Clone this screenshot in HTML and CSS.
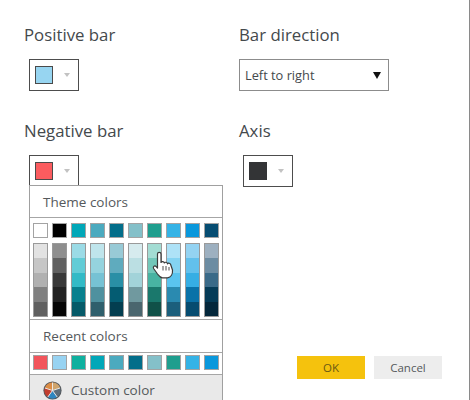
FILE: index.html
```html
<!DOCTYPE html>
<html lang="en">

<head>
    <meta charset="UTF-8">
    <meta name="viewport" content="width=device-width, initial-scale=1.0">
    <title>Bar colors</title>

    <link rel="stylesheet" href="styles.css">
</head>

<body>
    <div class="dialog">
        <div class="fields">
            <div class="field">
                <div class="field__label">Positive bar</div>
                <div class="picker">
                    <span class="picker__swatch picker__swatch--blue"></span>
                    <span class="picker__arrow"></span>
                </div>
            </div>
            <div class="field">
                <div class="field__label">Bar direction</div>
                <div class="select">
                    <span>Left to right</span>
                    <span class="select__arrow"></span>
                </div>
            </div>
            <div class="field">
                <div class="field__label">Negative bar</div>
                <div class="picker">
                    <span class="picker__swatch picker__swatch--red"></span>
                    <span class="picker__arrow"></span>
                </div>

                <div class="menu">
                    <div class="menu__title">Theme colors</div>
                    <div class="menu__theme">
                        <div class="tops">
                            <span class="chip" style="background:#ffffff"></span>
                            <span class="chip" style="background:#000000"></span>
                            <span class="chip" style="background:#01a7b8"></span>
                            <span class="chip" style="background:#4baabf"></span>
                            <span class="chip" style="background:#036e8a"></span>
                            <span class="chip" style="background:#84c0c9"></span>
                            <span class="chip" style="background:#1f9e8e"></span>
                            <span class="chip" style="background:#35b3e6"></span>
                            <span class="chip" style="background:#0a98dc"></span>
                            <span class="chip" style="background:#064d72"></span>
                        </div>
                        <div class="stacks" id="stacks"></div>
                    </div>
                    <div class="menu__title menu__title--recent">Recent colors</div>
                    <div class="menu__recent">
                        <span class="chip" style="background:#f2555c"></span>
                        <span class="chip" style="background:#98d3f2"></span>
                        <span class="chip" style="background:#0fb09f"></span>
                        <span class="chip" style="background:#01a7b8"></span>
                        <span class="chip" style="background:#4baabf"></span>
                        <span class="chip" style="background:#036e8a"></span>
                        <span class="chip" style="background:#84c0c9"></span>
                        <span class="chip" style="background:#1f9e8e"></span>
                        <span class="chip" style="background:#35b3e6"></span>
                        <span class="chip" style="background:#0a98dc"></span>
                    </div>
                    <div class="menu__custom">
                        <svg class="wheel" width="19" height="19" viewBox="0 0 20 20">
                            <circle cx="10" cy="10" r="9.6" fill="#55585c" />
                            <path d="M10 10 L10 1.6 A8.4 8.4 0 0 1 18 7.4 Z" fill="#cfa46c" />
                            <path d="M10 10 L18 7.4 A8.4 8.4 0 0 1 14.9 16.8 Z" fill="#5d6d7a" />
                            <path d="M10 10 L14.9 16.8 A8.4 8.4 0 0 1 5.1 16.8 Z" fill="#2e86c0" />
                            <path d="M10 10 L5.1 16.8 A8.4 8.4 0 0 1 2 7.4 Z" fill="#c23d2e" />
                            <path d="M10 10 L2 7.4 A8.4 8.4 0 0 1 10 1.6 Z" fill="#dc8d45" />
                            <path d="M10 10 L10 1.6 M10 10 L18 7.4 M10 10 L14.9 16.8 M10 10 L5.1 16.8 M10 10 L2 7.4" stroke="#eeeeee" stroke-width="1" />
                        </svg>
                        <span>Custom color</span>
                    </div>

                    <svg class="hand" width="22" height="28" viewBox="0 0 22 28">
                        <path d="M5.5 3 C5.5 0.8 9 0.8 9 3 L9 11.5 C9.5 10.3 12 10.3 12.3 12 C12.8 10.8 15.2 11 15.5 12.8 C16 11.8 18.6 12 18.8 14 L20.5 19 C20.8 23 19 26.5 15.5 26.8 L10.5 26.8 C8 26.8 7 25 5.5 23 L1.6 17.5 C0.6 15.6 2.8 14.2 4.2 15.6 L5.5 17 Z" fill="#ffffff" stroke="#3a3a3a" stroke-width="1.2" stroke-linejoin="round" />
                        <path d="M11 15 V19.5 M14 15 V19.5 M17 16 V19.5" stroke="#3a3a3a" stroke-width="0.9" fill="none" />
                    </svg>
                </div>
            </div>
            <div class="field">
                <div class="field__label">Axis</div>
                <div class="picker picker--axis">
                    <span class="picker__swatch picker__swatch--dark"></span>
                    <span class="picker__arrow"></span>
                </div>
            </div>
        </div>

        <div class="actions">
            <button class="btn btn--ok">OK</button>
            <button class="btn">Cancel</button>
        </div>
    </div>

    <script>
        // shades per theme column, light to dark
        var shades = [
            ["#e2e2e2", "#c6c6c6", "#b0b0b0", "#808080", "#606060"],
            ["#8e8e8e", "#606060", "#383838", "#222222", "#060606"],
            ["#9bdbe6", "#62ccd6", "#32bac6", "#08808e", "#055a68"],
            ["#bfe5ec", "#95d3de", "#76c2d4", "#4f919f", "#2f5f6c"],
            ["#98cad6", "#5fabbe", "#298fa6", "#045c72", "#033e50"],
            ["#d6ebee", "#bbdfe3", "#a2d3d9", "#70999f", "#4a666e"],
            ["#a3dcd3", "#72c7b9", "#48b3a2", "#1a786c", "#105148"],
            ["#aee2f7", "#84d3f2", "#5ac4ef", "#2a8ab0", "#1b5f7c"],
            ["#94d3f2", "#62c0ec", "#36aee4", "#0a72a8", "#064c70"],
            ["#9db0c0", "#6c8ca2", "#3a6a88", "#053b57", "#04273b"]
        ];
        var stacks = document.getElementById("stacks");
        shades.forEach(function (col) {
            var el = document.createElement("div");
            el.className = "stack";
            col.forEach(function (c) {
                var s = document.createElement("span");
                s.style.background = c;
                el.appendChild(s);
            });
            stacks.appendChild(el);
        });
    </script>
</body>

</html>
```

FILE: styles.css
```css
* {
    box-sizing: border-box;
}

body {
    margin: 0;
    width: 470px;
    height: 400px;
    overflow: hidden;
    background-color: #fff;
    font-family: "Open Sans", "Liberation Sans", sans-serif;
    color: #44494c;
}

.dialog {
    display: flex;
    flex-direction: column;
    height: 400px;
    padding: 24px 0 21px 24px;
    border-right: 1px solid #8a8a8a;
}

.fields {
    display: grid;
    grid-template-columns: 215px 1fr;
    grid-template-rows: 96px 1fr;
}

.field {
    position: relative;
}

.field__label {
    font-size: 16.8px;
    line-height: 21px;
}

.picker {
    display: flex;
    align-items: center;
    width: 50px;
    height: 32px;
    margin: 14px 0 0 5px;
    padding-left: 5px;
    border: 1px solid #4d4d4d;
    background-color: #fff;
}

.picker--axis {
    margin-left: 4px;
}

.picker__swatch {
    width: 18px;
    height: 18px;
    border: 1px solid #4a4a4a;
}

.picker__swatch--blue {
    background-color: #97d5f1;
}

.picker__swatch--red {
    background-color: #fb5c5f;
}

.picker__swatch--dark {
    background-color: #333436;
    border-color: #333436;
}

.picker__arrow {
    width: 0;
    height: 0;
    margin-left: 11px;
    border-left: 3.5px solid transparent;
    border-right: 3.5px solid transparent;
    border-top: 4px solid #c2c2c2;
}

.select {
    display: flex;
    align-items: center;
    justify-content: space-between;
    width: 150px;
    height: 32px;
    margin-top: 14px;
    padding: 0 7px 0 5px;
    border: 1px solid #8c8c8c;
    font-size: 12.8px;
}

.select__arrow {
    width: 0;
    height: 0;
    border-left: 4px solid transparent;
    border-right: 4px solid transparent;
    border-top: 7px solid #111;
}

.menu {
    position: absolute;
    top: 65px;
    left: 5px;
    width: 194px;
    border: 1px solid #a0a0a0;
    background-color: #fff;
}

.menu__title {
    height: 32px;
    padding-left: 13px;
    border-bottom: 1px solid #a6a6a6;
    font-size: 13.5px;
    line-height: 32px;
    color: #55595c;
}

.menu__title--recent {
    height: 33px;
}

.menu__theme {
    padding: 5px 3px 2px;
    border-bottom: 1px solid #a6a6a6;
}

.tops,
.stacks,
.menu__recent {
    display: flex;
    justify-content: space-between;
}

.chip {
    width: 15px;
    height: 15px;
    border: 1px solid #a3a3a3;
}

.stacks {
    margin-top: 5px;
}

.stack {
    display: flex;
    flex-direction: column;
    width: 15px;
    height: 74px;
    border: 1px solid #9a9a9a;
}

.stack span {
    flex: 1;
}

.menu__recent {
    padding: 2px 3px 4px;
    border-bottom: 1px solid #a6a6a6;
}

.menu__custom {
    display: flex;
    align-items: center;
    gap: 9px;
    height: 30px;
    padding-left: 13px;
    background-color: #e9e9e9;
    font-size: 13.5px;
    color: #55595c;
}

.wheel {
    flex: none;
}

/* mouse pointer sits on top of the swatches */
.hand {
    position: absolute;
    top: 65px;
    left: 122px;
}

.actions {
    display: flex;
    gap: 9px;
    margin-top: auto;
    padding-left: 273px;
}

.btn {
    width: 68px;
    height: 23px;
    padding: 0;
    border: 0;
    background-color: #ededed;
    font-family: inherit;
    font-size: 11.5px;
    color: #55595c;
}

.btn--ok {
    background-color: #f5c20d;
    color: #6b5a12;
}
```
